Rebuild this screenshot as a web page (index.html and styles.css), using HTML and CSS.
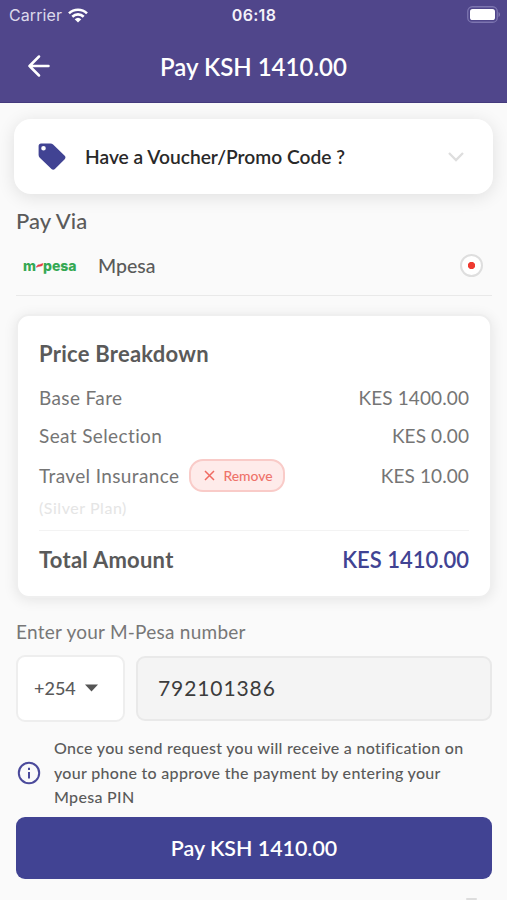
FILE: index.html
```html
<!DOCTYPE html>
<html lang="en">
<head>
<meta charset="utf-8">
<meta name="viewport" content="width=device-width, initial-scale=1">
<title>Pay KSH 1410.00</title>
<link rel="stylesheet" href="styles.css">
</head>
<body>
<div class="screen">
  <header class="header">
    <div class="status">
      <div class="carrier"><span>Carrier</span>
        <svg class="wifi" width="20" height="15" viewBox="0 0 20 15" fill="none" stroke="#fff" stroke-width="2.6"><path d="M1 5.4a13 13 0 0 1 18 0M4.3 8.7a8.2 8.2 0 0 1 11.4 0"/><path d="M10 14.6 6.7 11.3a4.8 4.8 0 0 1 6.600 0z" fill="#fff" stroke="none"/></svg>
      </div>
      <div class="time">06:18</div>
      <svg class="battery" width="34" height="17" viewBox="0 0 34 17"><rect x=".75" y=".75" width="29.5" height="15.5" rx="4.6" fill="none" stroke="#7d75b0" stroke-width="1.3"/><rect x="3" y="3" width="25" height="11" rx="2.6" fill="#fff"/><path d="M31.600 6v5c1.600-.8 1.600-4.200 0-5z" fill="#8f88bc"/></svg>
    </div>
    <div class="titlebar">
      <svg class="back" width="22" height="22" viewBox="0 0 22 22" fill="none" stroke="#fff" stroke-width="2.5" stroke-linecap="round" stroke-linejoin="round"><path d="M20.500 11H1.500M11 1.500 1.500 11l9.500 9.500"/></svg>
      <h1 class="title">Pay KSH 1410.00</h1>
    </div>
  </header>
  <main class="content">
    <section class="voucher">
      <svg class="tag" width="28" height="28" viewBox="0 0 28 28"><path fill="#414393" fill-rule="evenodd" d="M3 .5h9.500c1 0 1.900.4 2.600 1.100l11.600 11.200c1 1 1 2.400 0 3.400l-9.800 9.900c-1 1-2.400 1-3.400 0L1.800 14.700c-.8-.8-1.200-1.600-1.200-2.700V3C.6 1.600 1.600.5 3 .5zM5.500 2.900a2.300 2.300 0 1 0 0 4.600 2.300 2.300 0 0 0 0-4.600z"/></svg>
      <span class="voucher-text">Have a Voucher/Promo Code ?</span>
      <svg class="chevron" width="16" height="10" viewBox="0 0 16 10" fill="none" stroke="#dedede" stroke-width="2.300"><path d="m1 1 7 7 7-7"/></svg>
    </section>
    <h2 class="via">Pay Via</h2>
    <div class="method">
      <div class="logo"><span>m</span><svg width="7" height="5" viewBox="0 0 7 5"><path d="M.3 4.300C1 2 2.500 1.600 3.500 1.700L6.800.5 6.500 2.200C5 3.600 4 2.600.3 4.300z" fill="#e53945" stroke="#e53945" stroke-width=".5"/></svg><span>pesa</span></div>
      <span class="method-name">Mpesa</span>
      <span class="radio"></span>
    </div>
    <section class="card">
      <h2 class="card-title">Price Breakdown</h2>
      <div class="row"><span>Base Fare</span><span class="amount">KES 1400.00</span></div>
      <div class="row"><span>Seat Selection</span><span class="amount">KES 0.00</span></div>
      <div class="row insurance"><span>Travel Insurance</span>
        <span class="remove"><svg width="11" height="11" viewBox="0 0 11 11" stroke="#ef6a62" stroke-width="1.500"><path d="m1 1 9 9M10 1l-9 9"/></svg><span>Remove</span></span>
        <span class="amount">KES 10.00</span></div>
      <div class="plan">(Silver Plan)</div>
      <div class="total"><span>Total Amount</span><span class="total-value">KES 1410.00</span></div>
    </section>
    <div class="label">Enter your M-Pesa number</div>
    <div class="phone">
      <div class="code"><span>+254</span><svg width="13" height="8" viewBox="0 0 13 8"><path d="M0 .5h13L6.500 7.500z" fill="#555"/></svg></div>
      <div class="number"><span>792101386</span></div>
    </div>
    <div class="notice">
      <svg width="24" height="24" viewBox="0 0 24 24" fill="none" stroke="#4b4a9b" stroke-width="2"><circle cx="12" cy="12" r="10.200"/><path d="M12 11v6.500M12 6.800v2.200"/></svg>
      <p><span>Once you send request you will receive a notification on</span><br><span>your phone to approve the payment by entering your</span><br><span>Mpesa PIN</span></p>
    </div>
    <div class="pay"><span>Pay KSH 1410.00</span></div>
  </main>
  <div class="peek"></div>
</div>
</body>
</html>
```
FILE: styles.css
```css
* { box-sizing: border-box; }
body { margin: 0; background: #fafafa; font-family: Lato, sans-serif; color: #5a5a5a; }
h1, h2, p { margin: 0; font-weight: 500; }
svg { display: block; flex: none; }
.screen { width: 507px; height: 900px; overflow: hidden; display: flex; flex-direction: column; }
.header { height: 103px; flex: none; background: #50468b; border-bottom: 1px solid #443a7d; color: #fff; }
.status { height: 30px; display: grid; grid-template-columns: 1fr auto 1fr; align-items: center; padding: 0 8px 0 9px; font-family: Inter, sans-serif; }
.carrier { display: flex; align-items: center; gap: 6px; font-size: 16px; letter-spacing: .1px; color: #dcd9eb; }
.time { font-size: 16px; font-weight: 600; letter-spacing: .3px; color: #f3f2f9; }
.battery { justify-self: end; margin: -2px -2px 0 0; }
.titlebar { height: 72px; display: grid; grid-template-columns: 60px 1fr 60px; align-items: center; }
.back { margin-left: 28px; }
.title { text-align: center; font-size: 24px; line-height: 30px; font-weight: 600; padding-top: 2px; white-space: nowrap; }
.content { padding: 16px 15px 0 16px; }
.voucher { height: 75px; margin: 0 -1px 0 -2px; padding: 0 29px 0 24px; display: flex; align-items: center; background: #fff; border-radius: 17px; box-shadow: 0 3px 18px rgba(0,0,0,.11); }
.voucher-text { margin-left: 19px; font-size: 19.2px; font-weight: 600; color: #292929; white-space: nowrap; }
.chevron { margin-left: auto; }
.via { margin-top: 13px; height: 29px; font-size: 22px; line-height: 28px; letter-spacing: .1px; }
.method { height: 60px; display: flex; align-items: center; border-bottom: 1px solid #e9e9e9; padding: 0 9px 0 7px; }
.logo { width: 56px; display: flex; align-items: center; font-family: Inter, sans-serif; font-weight: 800; font-size: 14px; line-height: 16px; color: #35a853; }
.method-name { margin-left: 19px; font-size: 19.500px; font-weight: 500; }
.radio { margin-left: auto; width: 23px; height: 23px; border: 2px solid #dedede; border-radius: 50%; background: radial-gradient(circle, #ee3a30 3.300px, #fff 4px); }
.card { margin: 18px 0 0; height: 284px; border: 2px solid #efefef; border-radius: 13px; background: #fff; padding: 24px 21px 0; box-shadow: 0 2px 14px rgba(0,0,0,.09); }
.card-title { font-size: 22px; line-height: 28px; height: 38px; font-weight: 700; letter-spacing: .25px; }
.row { height: 38px; display: flex; align-items: center; justify-content: space-between; font-size: 19px; color: #757575; letter-spacing: .38px; white-space: nowrap; }
.amount { letter-spacing: .1px; }
.insurance { height: 42px; }
.remove { margin: 0 auto 0 10px; width: 96px; height: 33px; display: flex; align-items: center; justify-content: center; gap: 8px; padding-left: 2px; border: 2px solid #f9cbc8; border-radius: 14px; background: #feebea; color: #ee736b; font-size: 13.900px; font-weight: 500; letter-spacing: 0; }
.plan { height: 35px; border-bottom: 1px solid #f3f3f3; font-size: 16px; line-height: 24px; letter-spacing: .55px; color: #e5e5e5; }
.total { height: 57px; display: flex; align-items: center; justify-content: space-between; font-size: 22px; font-weight: 700; letter-spacing: .25px; }
.total-value { color: #414393; font-weight: 600; letter-spacing: 0; }
.label { margin-top: 20px; height: 28px; font-size: 19px; line-height: 28px; letter-spacing: .25px; color: #777; }
.phone { margin-top: 9px; display: flex; gap: 11px; align-items: center; }
.code { width: 109px; height: 67px; display: flex; align-items: center; gap: 9px; padding: 0 0 1px 16px; border: 2px solid #eee; border-radius: 9px; background: #fff; font-size: 18px; font-weight: 500; }
.number { flex: 1; height: 65px; display: flex; align-items: center; padding: 0 0 2px 20px; border: 2px solid #e9e9e9; border-radius: 9px; background: #f4f4f4; color: #3c3c3c; font-size: 21px; letter-spacing: .9px; }
.notice { margin-top: 14px; height: 73px; display: flex; align-items: center; gap: 13px; padding-left: 1px; }
.notice p { padding-top: 1px; font-size: 16px; line-height: 24.500px; letter-spacing: .3px; white-space: nowrap; }
.pay { margin-top: 8px; height: 62px; border-radius: 9px; display: flex; align-items: center; justify-content: center; background: #414393; color: #fff; font-size: 21.400px; font-weight: 600; }
.peek { margin: 19px 0 0 466px; width: 11px; height: 6px; border-radius: 5px; background: #ddd; }
```
